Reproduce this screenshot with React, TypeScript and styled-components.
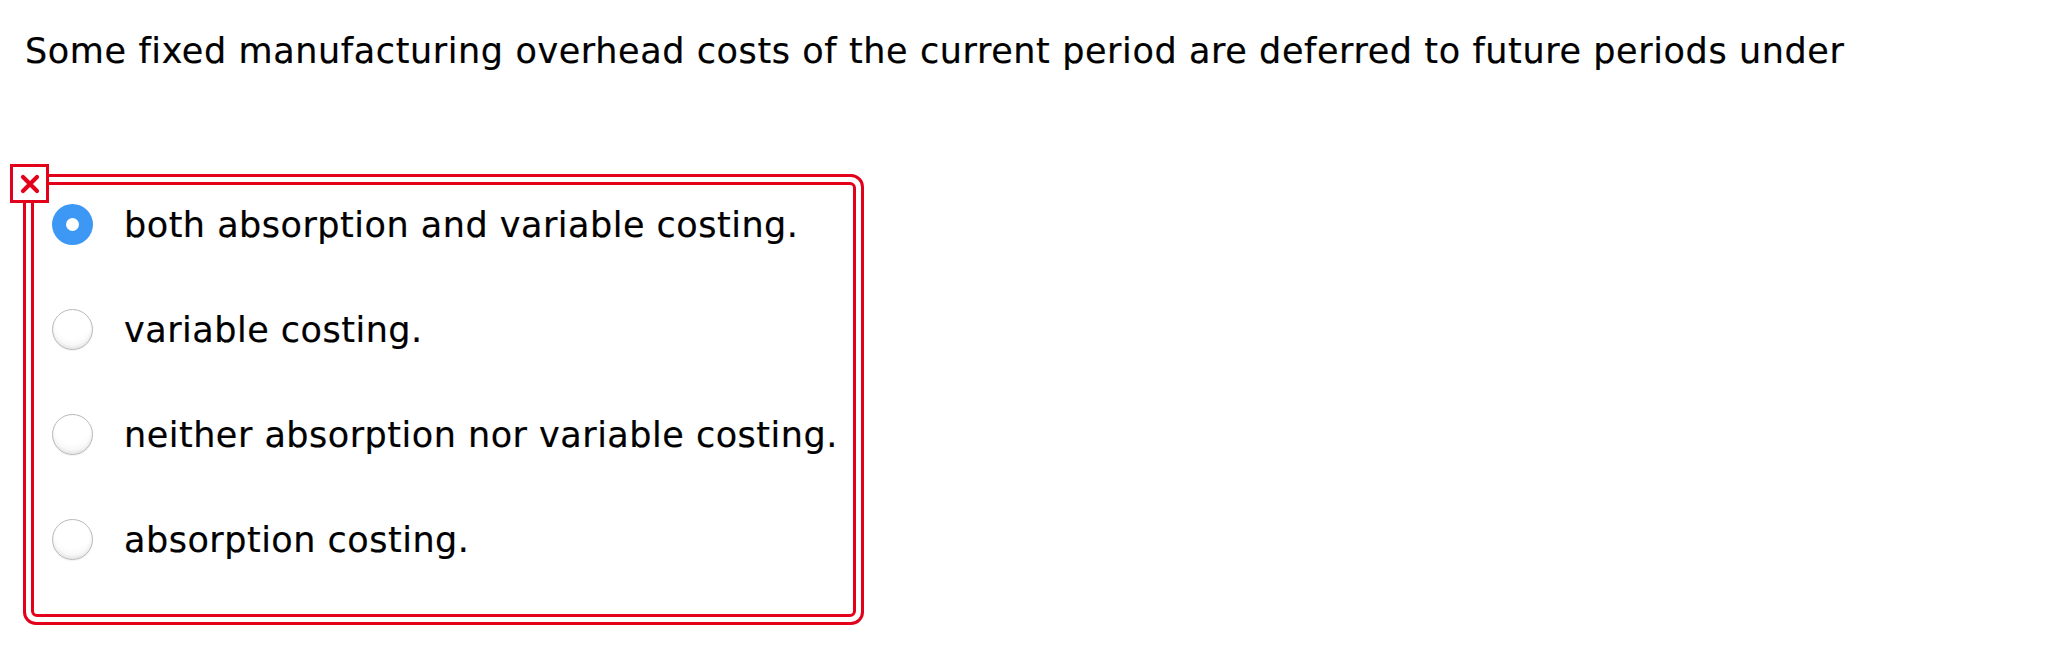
import React from "react";
import styled, { createGlobalStyle } from "styled-components";

const Global = createGlobalStyle`
  html, body { margin: 0; padding: 0; background: #ffffff; }
  body { font-family: "DejaVu Sans", Verdana, sans-serif; color: #000; }
`;

const Page = styled.div`
  padding: 31px 0 0 25px;
`;

const Question = styled.div`
  font-size: 35px;
  letter-spacing: 0.6px;
  line-height: 40px;
  white-space: nowrap;
  -webkit-text-stroke: 0.2px #000;
`;

const AnswerArea = styled.div`
  position: relative;
  margin: 103px 0 0 -2px;
  width: 841px;
`;

const OuterFrame = styled.div`
  border: 3px solid #e3001b;
  border-radius: 13px;
  padding: 5px;
`;

const InnerFrame = styled.div`
  border: 3px solid #e3001b;
  border-radius: 6px;
  padding: 19px 18px 54px;
  display: flex;
  flex-direction: column;
  gap: 64px;
`;

const Badge = styled.div`
  position: absolute;
  left: -13px;
  top: -10px;
  width: 39px;
  height: 39px;
  box-sizing: border-box;
  border: 3px solid #e3001b;
  background: #fff;
  display: flex;
  align-items: center;
  justify-content: center;
`;

const Option = styled.label`
  display: flex;
  align-items: center;
  gap: 31px;
  font-size: 35px;
  letter-spacing: 0.5px;
  height: 41px;
  white-space: nowrap;
  -webkit-text-stroke: 0.2px #000;
`;

const Radio = styled.span<{ $checked?: boolean }>`
  width: 41px;
  height: 41px;
  border-radius: 50%;
  box-sizing: border-box;
  flex: none;
  display: flex;
  align-items: center;
  justify-content: center;
  ${(p) =>
    p.$checked
      ? `background: #3d97f5; border: none;`
      : `background: radial-gradient(circle at 50% 30%, #ffffff 50%, #ececec 100%);
         border: 1.5px solid #b9b9b9;
         box-shadow: inset 0 -2px 3px rgba(0,0,0,0.06), 0 1px 1px rgba(0,0,0,0.05);`}
`;

const Dot = styled.span`
  width: 13px;
  height: 13px;
  border-radius: 50%;
  background: #fff;
`;

const options = [
  "both absorption and variable costing.",
  "variable costing.",
  "neither absorption nor variable costing.",
  "absorption costing.",
];

export default function App() {
  return (
    <Page>
      <Global />
      <Question>
        Some fixed manufacturing overhead costs of the current period are deferred to future periods under
      </Question>
      <AnswerArea>
        <OuterFrame>
          <InnerFrame>
            {options.map((o, i) => (
              <Option key={o}>
                <Radio $checked={i === 0}>{i === 0 && <Dot />}</Radio>
                <span>{o}</span>
              </Option>
            ))}
          </InnerFrame>
        </OuterFrame>
        <Badge>
          <svg width="20" height="20" viewBox="0 0 20 20">
            <path d="M3 3 L17 17 M17 3 L3 17" stroke="#e3001b" strokeWidth="4.2" strokeLinecap="round" />
          </svg>
        </Badge>
      </AnswerArea>
    </Page>
  );
}
